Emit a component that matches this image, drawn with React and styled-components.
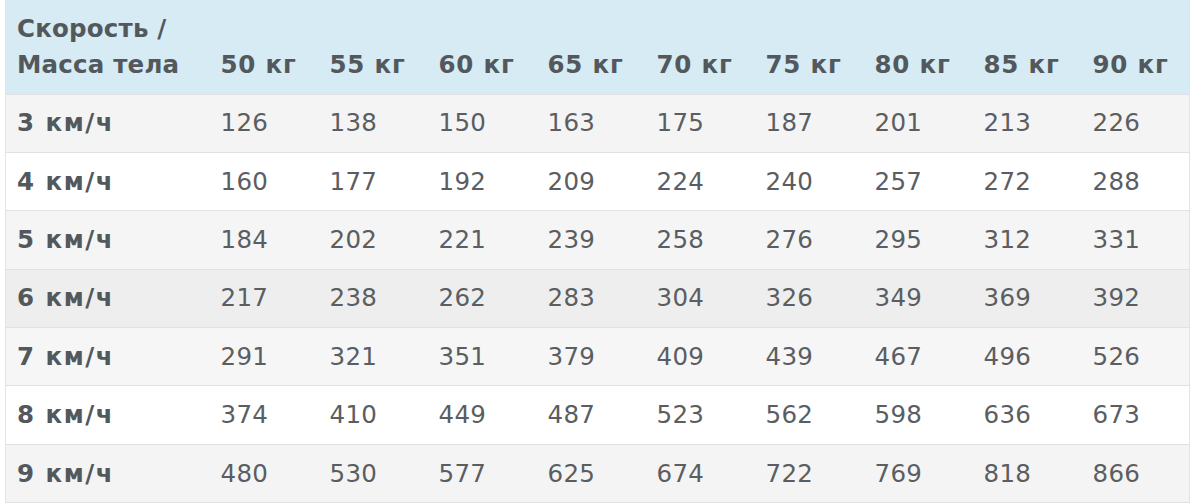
import React from "react";
import styled, { createGlobalStyle } from "styled-components";

const Global = createGlobalStyle`
  html, body { margin: 0; padding: 0; background: #ffffff; }
  body { font-family: "DejaVu Sans", Verdana, sans-serif; }
`;

const Page = styled.div`
  padding: 0 11px 0 5px;
`;

const Table = styled.table`
  width: 1184px;
  border-collapse: collapse;
  table-layout: fixed;
  border-left: 1px solid #e3e3e3;
  border-right: 1px solid #e3e3e3;
  color: #555a5e;
  font-size: 24.5px;
`;

const HeadRow = styled.tr`
  background: #d6ebf4;
  height: 94px;
`;

const Th = styled.th`
  text-align: left;
  vertical-align: bottom;
  font-weight: bold;
  line-height: 36px;
  padding: 0 0 11px ${(p) => (p.$first ? "11px" : "12px")};
  letter-spacing: ${(p) => (p.$first ? "0.2px" : "0.8px")};
  color: #53585c;
  width: ${(p) => (p.$first ? "203px" : "109px")};
  box-sizing: border-box;
  white-space: nowrap;
`;

const Row = styled.tr`
  height: 58.4px;
  background: ${(p) => p.$bg};
  border-top: 1px solid #e1e1e1;
  &:last-child { border-bottom: 1px solid #e1e1e1; }
`;

const Td = styled.td`
  padding: 0 0 0 ${(p) => (p.$bold ? "11px" : "12px")};
  line-height: 36px;
  vertical-align: middle;
  font-weight: ${(p) => (p.$bold ? "bold" : "normal")};
  letter-spacing: ${(p) => (p.$bold ? "1.5px" : "0.3px")};
  color: ${(p) => (p.$bold ? "#53585c" : "#5a5e62")};
  white-space: nowrap;
`;

const weights = [50, 55, 60, 65, 70, 75, 80, 85, 90];
const data = [
  [3, [126, 138, 150, 163, 175, 187, 201, 213, 226]],
  [4, [160, 177, 192, 209, 224, 240, 257, 272, 288]],
  [5, [184, 202, 221, 239, 258, 276, 295, 312, 331]],
  [6, [217, 238, 262, 283, 304, 326, 349, 369, 392]],
  [7, [291, 321, 351, 379, 409, 439, 467, 496, 526]],
  [8, [374, 410, 449, 487, 523, 562, 598, 636, 673]],
  [9, [480, 530, 577, 625, 674, 722, 769, 818, 866]],
];
const bgs = ["#f4f4f4", "#ffffff", "#f5f5f5", "#eeeeee", "#f6f6f6", "#ffffff", "#f4f4f4"];

export default function App() {
  return (
    <Page>
      <Global />
      <Table>
        <thead>
          <HeadRow>
            <Th $first>
              Скорость /<br />Масса тела
            </Th>
            {weights.map((w) => (
              <Th key={w}>{w} кг</Th>
            ))}
          </HeadRow>
        </thead>
        <tbody>
          {data.map(([speed, vals], i) => (
            <Row key={speed} $bg={bgs[i]}>
              <Td $bold>{speed} км/ч</Td>
              {vals.map((v, j) => (
                <Td key={j}>{v}</Td>
              ))}
            </Row>
          ))}
        </tbody>
      </Table>
    </Page>
  );
}
